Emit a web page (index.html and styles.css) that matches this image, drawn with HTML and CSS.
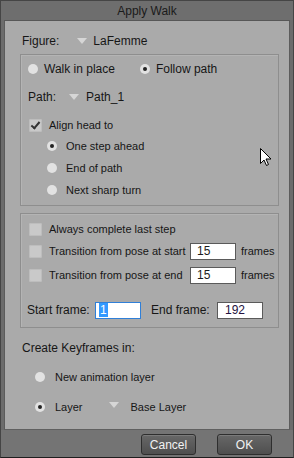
FILE: index.html
```html
<!DOCTYPE html>
<html lang="en">
<head>
    <meta charset="UTF-8">
    <title>Apply Walk</title>
    <link rel="stylesheet" href="styles.css">
</head>
<body>
    <div class="window">
        <div class="titlebar">Apply Walk</div>
        <div class="panel">
            <div class="row figure-row">
                <span class="label">Figure:</span>
                <span class="tri"></span>
                <span>LaFemme</span>
            </div>

            <div class="group group-path">
                <div class="row mode-row">
                    <span class="radio"></span><span class="opt">Walk in place</span>
                    <span class="radio on follow"></span><span class="opt">Follow path</span>
                </div>
                <div class="row path-row">
                    <span>Path:</span>
                    <span class="tri"></span>
                    <span>Path_1</span>
                </div>
                <div class="row align-row">
                    <span class="check on"></span><span class="small">Align head to</span>
                </div>
                <div class="row sub-row">
                    <span class="radio on"></span><span class="small">One step ahead</span>
                </div>
                <div class="row sub-row">
                    <span class="radio"></span><span class="small">End of path</span>
                </div>
                <div class="row sub-row">
                    <span class="radio"></span><span class="small">Next sharp turn</span>
                </div>
            </div>

            <div class="group group-steps">
                <div class="row step-row first">
                    <span class="check"></span><span class="small">Always complete last step</span>
                </div>
                <div class="row step-row">
                    <span class="check"></span><span class="small trans">Transition from pose at start</span>
                    <span class="field">15</span><span class="small">frames</span>
                </div>
                <div class="row step-row third">
                    <span class="check"></span><span class="small trans">Transition from pose at end</span>
                    <span class="field">15</span><span class="small">frames</span>
                </div>
                <div class="row frame-row">
                    <span class="frame-label">Start frame:</span>
                    <span class="field focus"><span class="sel">1</span></span>
                    <span class="frame-label end">End frame:</span>
                    <span class="field end-field">192</span>
                </div>
            </div>

            <div class="row keys-title">Create Keyframes in:</div>
            <div class="row key-row new-layer">
                <span class="radio"></span><span class="small">New animation layer</span>
            </div>
            <div class="row key-row">
                <span class="radio on"></span><span class="small layer">Layer</span>
                <span class="tri"></span>
                <span class="small">Base Layer</span>
            </div>

            <svg class="cursor" width="12" height="19" viewBox="0 0 12 19">
                <path d="M0.5 0.5 L0.5 15.5 L4 12 L6.5 17.5 L8.5 16.5 L6 11 L11 11 Z" fill="#fff" stroke="#000" stroke-width="1"/>
            </svg>
        </div>
        <div class="footer">
            <button class="btn">Cancel</button>
            <button class="btn ok">OK</button>
        </div>
    </div>
</body>
</html>
```

FILE: styles.css
```css
body {
    margin: 0;
    background-color: #3a3a3a;
    font-family: "Liberation Sans", Arial, sans-serif;
    font-size: 12px;
    color: #161616;
}
.window {
    width: 294px;
    height: 458px;
    box-sizing: border-box;
    border: 1px solid #454545;
    border-bottom-color: #1e1e1e;
    background-color: #6c6c6c;
    display: flex;
    flex-direction: column;
}
.titlebar {
    height: 19px;
    line-height: 21px;
    text-align: center;
    font-size: 12px;
    color: #1a1a1a;
    background-color: #6e6e6e;
}
.panel {
    position: relative;
    flex: 1;
    margin: 0 3px 0 3px;
    background-color: #aaaaaa;
    border-top: 1px solid #575757;
    border-left: 1px solid #5c5c5c;
    border-right: 1px solid #5c5c5c;
    border-bottom: 1px solid #606060;
    padding: 0 10px 0 15px;
}
.row {
    display: flex;
    align-items: center;
    height: 20px;
    white-space: nowrap;
}
.row > * {
    flex-shrink: 0;
}
.figure-row {
    margin-top: 10px;
    margin-left: 2px;
}
.figure-row .tri {
    margin: 0 6px 0 18px;
}
.tri {
    width: 0;
    height: 0;
    border-left: 5px solid transparent;
    border-right: 5px solid transparent;
    border-top: 6px solid #d6d6d6;
    margin-top: -4px;
}

/* group boxes */
.group {
    border: 1px solid #8e8e8e;
    box-shadow: inset 1px 1px 0 #b4b4b4;
    padding-left: 7px;
}
.group-path {
    margin-top: 3px;
    padding-top: 4px;
    padding-bottom: 4px;
}
.radio {
    width: 10px;
    height: 10px;
    border-radius: 50%;
    background-color: #e2e2e2;
    position: relative;
}
.radio.on::after {
    content: "";
    position: absolute;
    left: 3px;
    top: 3px;
    width: 4px;
    height: 4px;
    border-radius: 50%;
    background-color: #222;
}
.opt {
    margin-left: 6px;
}
.mode-row .follow {
    margin-left: 25px;
}
.path-row {
    margin-top: 8px;
}
.path-row .tri {
    margin: 0 7px 0 13px;
}
.align-row {
    margin-top: 8px;
}
.check {
    width: 13px;
    height: 13px;
    border-radius: 2px;
    background-color: #c9c9c9;
    box-shadow: inset 0 0 0 1px #bdbdbd;
    position: relative;
    margin-left: 1px;
}
.check.on::after {
    content: "";
    position: absolute;
    left: 4px;
    top: 1px;
    width: 3px;
    height: 7px;
    border-right: 2px solid #333;
    border-bottom: 2px solid #333;
    transform: rotate(40deg);
}
.small {
    font-size: 11px;
    margin-left: 7px;
}
.sub-row {
    height: 22px;
    padding-left: 19px;
}
.sub-row .small {
    margin-left: 9px;
}

.group-steps {
    margin-top: 7px;
    padding-top: 4px;
    padding-bottom: 6px;
}
.step-row {
    height: 22px;
}
.step-row .small {
    margin-left: 7px;
}
.step-row.third {
    margin-top: 2px;
}
.trans {
    width: 141px;
}
.field {
    box-sizing: border-box;
    width: 46px;
    height: 17px;
    background-color: #fff;
    border: 1px solid #5a5a5a;
    padding-left: 6px;
    font-size: 12px;
    line-height: 15px;
    color: #1c1c1c;
}
.step-row .field + .small {
    margin-left: 5px;
}
.frame-row {
    height: 22px;
    margin-top: 13px;
    margin-left: -1px;
}
.frame-label {
    font-size: 12px;
    width: 63px;
}
.frame-label.end {
    margin-left: 10px;
    width: 60px;
}
.focus {
    margin-left: 5px;
    border-color: #2f7fd8;
    padding-left: 3px;
}
.sel {
    background-color: #3399ff;
    color: #fff;
    padding: 0 1px;
}
.end-field {
    margin-left: 6px;
    color: #241240;
    padding-left: 7px;
}

.keys-title {
    margin-top: 10px;
    margin-left: 2px;
}
.key-row {
    height: 22px;
    padding-left: 15px;
}
.key-row .small {
    margin-left: 10px;
}
.new-layer {
    margin-top: 8px;
}
.key-row + .key-row {
    margin-top: 8px;
}
.key-row .tri {
    margin-left: 26px;
}
.key-row .tri + .small {
    margin-left: 12px;
}

.cursor {
    position: absolute;
    left: 255px;
    top: 127px;
}

/* bottom buttons */
.footer {
    height: 27px;
    display: flex;
    justify-content: flex-end;
    align-items: center;
    padding-right: 21px;
    gap: 21px;
    background-color: #747474;
}
.btn {
    width: 55px;
    height: 21px;
    padding: 0;
    border: 1px solid #2e2e2e;
    border-radius: 3px;
    background: linear-gradient(#676767, #4f4f4f);
    box-shadow: inset 0 1px 0 #7a7a7a;
    color: #f2f2f2;
    font-family: "Liberation Sans", Arial, sans-serif;
    font-size: 12px;
    margin-top: 2px;
}
```
